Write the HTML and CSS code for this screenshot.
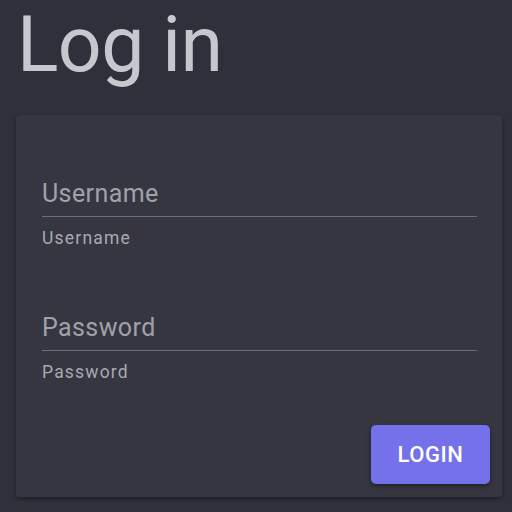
FILE: index.html
```html
<!DOCTYPE html>
<html>
<head>
<meta charset="utf-8">
<link rel="stylesheet" href="styles.css">
</head>
<body>
<div class="page">
  <h1 class="title">Log in</h1>
  <form class="card">
    <div class="field">
      <div class="input">Username</div>
      <div class="helper">Username</div>
    </div>
    <div class="field field-second">
      <div class="input">Password</div>
      <div class="helper">Password</div>
    </div>
    <div class="actions">
      <button type="button" class="btn">LOGIN</button>
    </div>
  </form>
</div>
</body>
</html>
```
FILE: styles.css
```css
html, body {
  margin: 0;
  padding: 0;
  background: #2f3039;
  font-family: Roboto, "Liberation Sans", sans-serif;
}
.page {
  padding: 0 10px 0 16px;
  height: 512px;
  box-sizing: border-box;
}
.title {
  margin: 0;
  padding-left: 1px;
  font-size: 77px;
  font-weight: 400;
  letter-spacing: -0.6px;
  line-height: 90px;
  color: #c6c8cd;
  height: 115px;
}
.card {
  background: #353640;
  border-radius: 4px;
  box-shadow: 0 2px 4px rgba(0,0,0,0.35);
  padding: 57px 12px 13px 26px;
  height: 382px;
  box-sizing: border-box;
  display: flex;
  flex-direction: column;
}
.field {
  margin-right: 13px;
}
.field-second {
  margin-top: 57px;
}
.input {
  font-size: 25px;
  letter-spacing: 0.4px;
  line-height: 44px;
  color: #a0a2a9;
  border-bottom: 1px solid #6c6e76;
}
.helper {
  font-size: 17.5px;
  font-weight: 400;
  line-height: 22px;
  margin-top: 10px;
  color: #a8aab0;
  letter-spacing: 1.2px;
}
.actions {
  margin-top: auto;
  display: flex;
  justify-content: flex-end;
}
.btn {
  width: 119px;
  height: 59px;
  border: none;
  border-radius: 5px;
  background: #7571ea;
  color: #ffffff;
  font-family: Roboto, "Liberation Sans", sans-serif;
  font-size: 22px;
  font-weight: 500;
  letter-spacing: 0.6px;
  box-shadow: 0 2px 4px rgba(0,0,0,0.4);
}
```
